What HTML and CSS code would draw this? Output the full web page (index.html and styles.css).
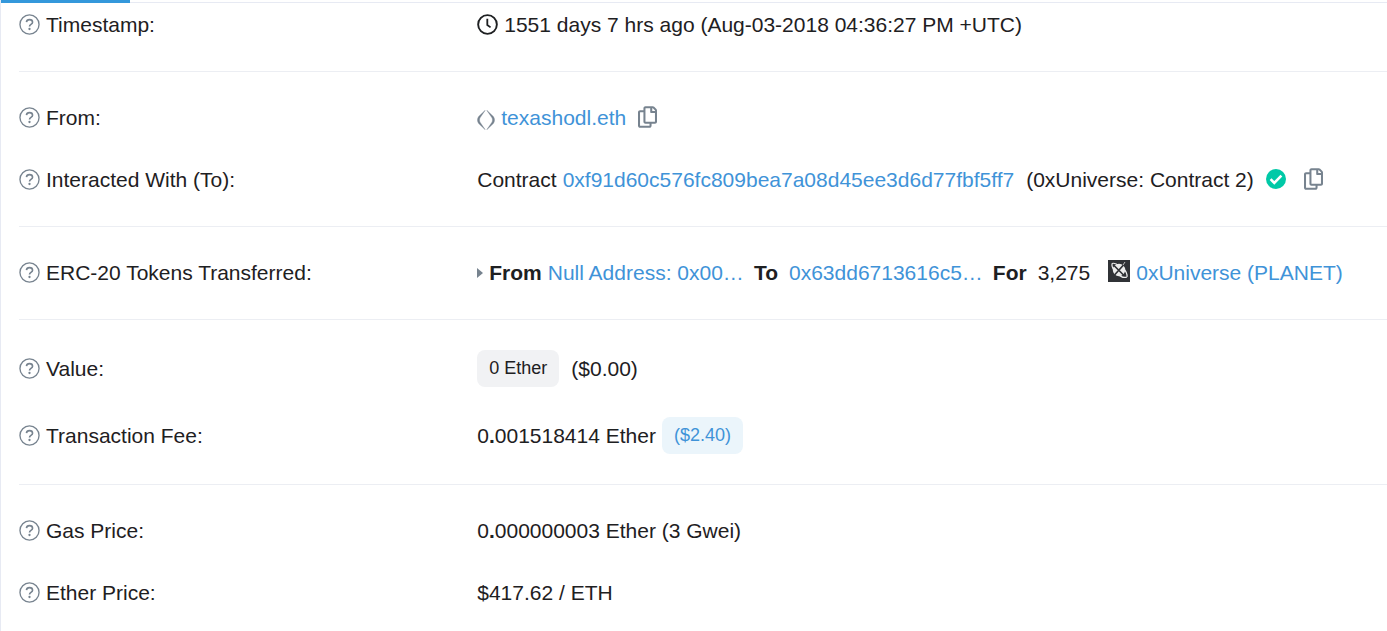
FILE: index.html
```
<!DOCTYPE html>
<html lang="en">

<head>
    <meta charset="UTF-8" />
    <meta name="viewport" content="width=device-width, initial-scale=1.0" />
    <title>Transaction Details</title>
    <link rel="stylesheet" href="styles.css">
</head>

<body>
    <!-- Shared icons -->
    <svg class="sprite" aria-hidden="true">
        <symbol id="help" viewBox="0 0 22 22">
            <circle cx="11" cy="11" r="10" fill="none" stroke="currentColor" stroke-width="1.4" />
            <path d="M7.800 8.600C8 6.800 9.300 5.900 11 5.900c1.800 0 3.200 1 3.200 2.700 0 2.300-3.200 2.300-3.200 4.400" fill="none" stroke="currentColor" stroke-width="1.700" />
            <circle cx="11" cy="15.700" r="1.200" fill="currentColor" />
        </symbol>
        <symbol id="copy" viewBox="0 0 448 512">
            <path d="M433.941 65.941l-51.882-51.882A48 48 0 0 0 348.118 0H176c-26.51 0-48 21.49-48 48v48H48c-26.51 0-48 21.49-48 48v320c0 26.51 21.49 48 48 48h224c26.51 0 48-21.49 48-48v-48h80c26.51 0 48-21.49 48-48V99.882a48 48 0 0 0-14.059-33.941zM266 464H54a6 6 0 0 1-6-6V150a6 6 0 0 1 6-6h74v224c0 26.51 21.49 48 48 48h96v42a6 6 0 0 1-6 6zm128-96H182a6 6 0 0 1-6-6V54a6 6 0 0 1 6-6h106v88c0 13.255 10.745 24 24 24h88v202a6 6 0 0 1-6 6zm6-256h-64V48h9.632c1.591 0 3.117.632 4.243 1.757l48.368 48.368a6 6 0 0 1 1.757 4.243V112z" fill="currentColor" />
        </symbol>
    </svg>

    <main class="card">
        <div class="tabs"><span class="tab-active"></span></div>
        <dl class="details">
            <div class="row row-first">
                <dt><svg class="help"><use href="#help" /></svg>Timestamp:</dt>
                <dd>
                    <svg class="clock" viewBox="0 0 22 22">
                        <circle cx="11" cy="11" r="9.800" fill="none" stroke="currentColor" stroke-width="2" />
                        <path d="M10.800 5v6.500l3.400 2.500" fill="none" stroke="currentColor" stroke-width="1.900" />
                    </svg>
                    <span>1551 days 7 hrs ago (Aug-03-2018 04:36:27 PM +UTC)</span>
                </dd>
            </div>
            <div class="divider"></div>
            <div class="row">
                <dt><svg class="help"><use href="#help" /></svg>From:</dt>
                <dd>
                    <svg class="ens" viewBox="0 0 18 20">
                        <path d="M8.200 0.300L1.600 6.600C.1 8.700.1 11.300 1.600 13.400L8.200 19.700 2.900 12C2.400 10.600 2.400 9.400 2.900 8zM9.800 0.300l6.600 6.300c1.500 2.100 1.500 4.700 0 6.800l-6.600 6.300 5.300-7.700c.5-1.400.5-2.600 0-4z" fill="currentColor" stroke="currentColor" stroke-width=".4" />
                    </svg>
                    <a href="#">texashodl.eth</a>
                    <button class="copy" type="button" aria-label="Copy"><svg><use href="#copy" /></svg></button>
                </dd>
            </div>
            <div class="row">
                <dt><svg class="help"><use href="#help" /></svg>Interacted With (To):</dt>
                <dd>
                    <span>Contract</span>
                    <a href="#">0xf91d60c576fc809bea7a08d45ee3d6d77fbf5ff7</a>
                    <span class="spaced">(0xUniverse: Contract 2)</span>
                    <svg class="verified" viewBox="0 0 20 20">
                        <circle cx="10" cy="10" r="10" fill="#00c9a7" />
                        <path d="M4.600 10.200l3.700 3.700 7.100-7.200" fill="none" stroke="#fff" stroke-width="2.600" />
                    </svg>
                    <button class="copy copy-far" type="button" aria-label="Copy"><svg><use href="#copy" /></svg></button>
                </dd>
            </div>
            <div class="divider"></div>
            <div class="row">
                <dt><svg class="help"><use href="#help" /></svg>ERC-20 Tokens Transferred:</dt>
                <dd>
                    <svg class="caret" viewBox="0 0 6 10"><path d="M0 0l6 5-6 5z" fill="currentColor" /></svg>
                    <b>From</b>
                    <a href="#">Null Address: 0x00…</a>
                    <b class="word">To</b>
                    <a class="spaced" href="#">0x63dd6713616c5…</a>
                    <b class="word">For</b>
                    <span class="spaced">3,275</span>
                    <svg class="token" viewBox="0 0 22 22">
                        <path d="M0 0h22v22H0z" fill="#303236" />
                        <circle cx="11" cy="10" r="6.200" fill="#ececec" />
                        <path d="M4 3.500c2.500-.8 5 .5 7 2.500M19 17c-3 1.200-7-.5-10-3.500M4 3.500c-.4 3 1 6 4 9M19 17c.3-3-1-6-3.500-8.500" fill="none" stroke="#ececec" stroke-width="1.200" />
                        <path d="M6 5.500l10 10M15.500 5L6.500 15" fill="none" stroke="#303236" stroke-width="1.700" />
                        <path d="M15 5l2-3" stroke="#bbb" stroke-width="1" />
                    </svg>
                    <a href="#">0xUniverse (PLANET)</a>
                </dd>
            </div>
            <div class="divider"></div>
            <div class="row">
                <dt><svg class="help"><use href="#help" /></svg>Value:</dt>
                <dd>
                    <span class="badge">0 Ether</span>
                    <span class="spaced">($0.00)</span>
                </dd>
            </div>
            <div class="row">
                <dt><svg class="help"><use href="#help" /></svg>Transaction Fee:</dt>
                <dd>
                    <span>0<b>.</b>001518414 Ether</span>
                    <span class="badge badge-blue">($2.40)</span>
                </dd>
            </div>
            <div class="divider"></div>
            <div class="row">
                <dt><svg class="help"><use href="#help" /></svg>Gas Price:</dt>
                <dd>0<b>.</b>000000003 Ether (3 Gwei)</dd>
            </div>
            <div class="row">
                <dt><svg class="help"><use href="#help" /></svg>Ether Price:</dt>
                <dd>$417.62 / ETH</dd>
            </div>
        </dl>
    </main>
</body>

</html>
```
FILE: styles.css
```
body {
    margin: 0;
    background: #fff;
    color: #1e2022;
    font-family: "Liberation Sans", Arial, sans-serif;
    font-size: 21px;
    line-height: 32px;
    overflow: hidden;
}

a {
    color: #3f93d8;
    text-decoration: none;
}

.sprite {
    display: none;
}

.card {
    min-height: 100vh;
    box-sizing: border-box;
    border-left: 1px solid #e7eaf3;
}

.tabs {
    height: 2px;
    border-bottom: 1px solid #e7eaf3;
}

.tab-active {
    display: block;
    width: 129px;
    height: 3px;
    background: #3498db;
}

.details {
    margin: 0;
    padding-left: 18px;
}

.row {
    display: flex;
    align-items: center;
    padding: 15px 0;
}

.row-first {
    padding-top: 6px;
}

dt {
    display: flex;
    align-items: center;
    flex: 0 0 33.5%;
    gap: 6px;
}

dd {
    display: flex;
    align-items: center;
    flex: 1;
    margin: 0;
    white-space: nowrap;
}

dd > * + * {
    margin-left: 6px;
}

dd > .spaced {
    margin-left: 12px;
}

dd > .word {
    margin-left: 10px;
}

dd > .word + .spaced {
    margin-left: 11px;
}

.divider {
    height: 1px;
    margin: 15px 0;
    background: #eceef3;
}

.help,
.clock {
    width: 21px;
    height: 21px;
    padding-bottom: 1px;
}

.help {
    color: #77838f;
}

.ens {
    width: 18px;
    height: 20px;
    padding-top: 3px;
    color: #77838f;
}

dd > .copy {
    display: flex;
    margin-left: 12px;
    padding: 0 0 2px;
    border: 0;
    background: none;
    color: #77838f;
    cursor: pointer;
}

.copy svg {
    width: 19px;
    height: 22px;
}

dd > .copy-far {
    margin-left: 18px;
}

dd > .verified {
    width: 20px;
    height: 20px;
    margin-left: 12px;
    padding-bottom: 2px;
}

.caret {
    width: 6px;
    height: 10px;
    color: #77838f;
}

dd > .token {
    width: 22px;
    height: 22px;
    margin-left: 18px;
    padding-bottom: 4px;
}

.badge {
    padding: 2px 12px 3px;
    border-radius: 8px;
    background: #f1f2f4;
    font-size: 18px;
}

.badge-blue {
    background: #ebf5fb;
    color: #3f93d8;
}
```
